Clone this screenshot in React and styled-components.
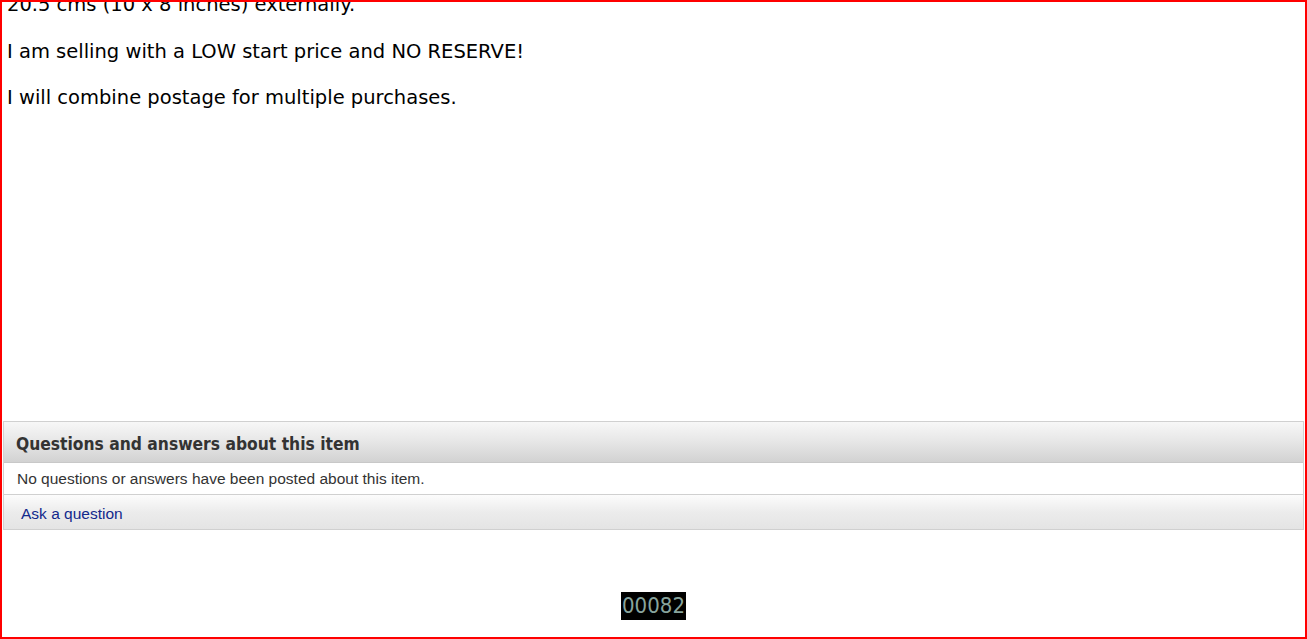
import React from "react";
import styled, { createGlobalStyle } from "styled-components";

const Global = createGlobalStyle`
  html, body { margin: 0; padding: 0; background: #fff; }
  #root { width: 1307px; height: 639px; }
`;

const Frame = styled.div`
  box-sizing: border-box;
  width: 1307px;
  height: 639px;
  border: 2px solid #ff0000;
  overflow: hidden;
  display: flex;
  flex-direction: column;
  background: #fff;
`;

const Description = styled.div`
  margin-top: -9px;
  padding: 0 5px;
  font-family: "DejaVu Sans", Verdana, sans-serif;
  font-size: 19.5px;
  line-height: 23px;
  color: #000;
  height: 428px;
  flex: none;
`;

const Para = styled.p`
  margin: 0 0 23.5px;
`;

const Panel = styled.section`
  margin: 0 1px;
  border: 1px solid #d0d0d0;
  border-bottom: none;
`;

const Header = styled.h3`
  box-sizing: border-box;
  margin: 0;
  height: 41px;
  display: flex;
  align-items: center;
  padding: 3px 0 0 12px;
  font-family: "DejaVu Sans Condensed", "DejaVu Sans", Verdana, sans-serif;
  font-stretch: condensed;
  font-weight: bold;
  font-size: 17.3px;
  color: #333;
  background: linear-gradient(#f7f7f7, #e6e6e6 50%, #d2d2d2);
  border-bottom: 1px solid #c8c8c8;
`;

const Row = styled.div`
  box-sizing: border-box;
  display: flex;
  align-items: center;
  padding: ${(p) => p.$top}px 0 0 ${(p) => p.$indent}px;
  font-family: "Liberation Sans", Arial, sans-serif;
  font-size: 15.5px;
  color: #333;
  border-bottom: 1px solid #d0d0d0;
  background: ${(p) => (p.$shaded ? "linear-gradient(#fcfcfc, #ececec 50%, #e4e4e4)" : "#fff")};
  height: ${(p) => p.$h}px;
`;

const Link = styled.a`
  color: #12288c;
  text-decoration: none;
  cursor: pointer;
`;

const CounterWrap = styled.div`
  margin-top: 62px;
  display: flex;
  justify-content: center;
`;

const Counter = styled.span`
  background: #000;
  color: #88a49d;
  font-family: "DejaVu Sans Condensed", "DejaVu Sans", Verdana, sans-serif;
  font-stretch: condensed;
  font-size: 22px;
  line-height: 28px;
  height: 28px;
  padding: 0 1px;
`;

export default function App() {
  return (
    <>
      <Global />
      <Frame>
        <Description>
          <Para>20.5 cms (10 x 8 inches) externally.</Para>
          <Para>I am selling with a LOW start price and NO RESERVE!</Para>
          <Para>I will combine postage for multiple purchases.</Para>
        </Description>
        <Panel>
          <Header>Questions and answers about this item</Header>
          <Row $indent={13} $top={0} $h={32}>No questions or answers have been posted about this item.</Row>
          <Row $indent={17} $top={3} $h={35} $shaded>
            <Link>Ask a question</Link>
          </Row>
        </Panel>
        <CounterWrap>
          <Counter>00082</Counter>
        </CounterWrap>
      </Frame>
    </>
  );
}
